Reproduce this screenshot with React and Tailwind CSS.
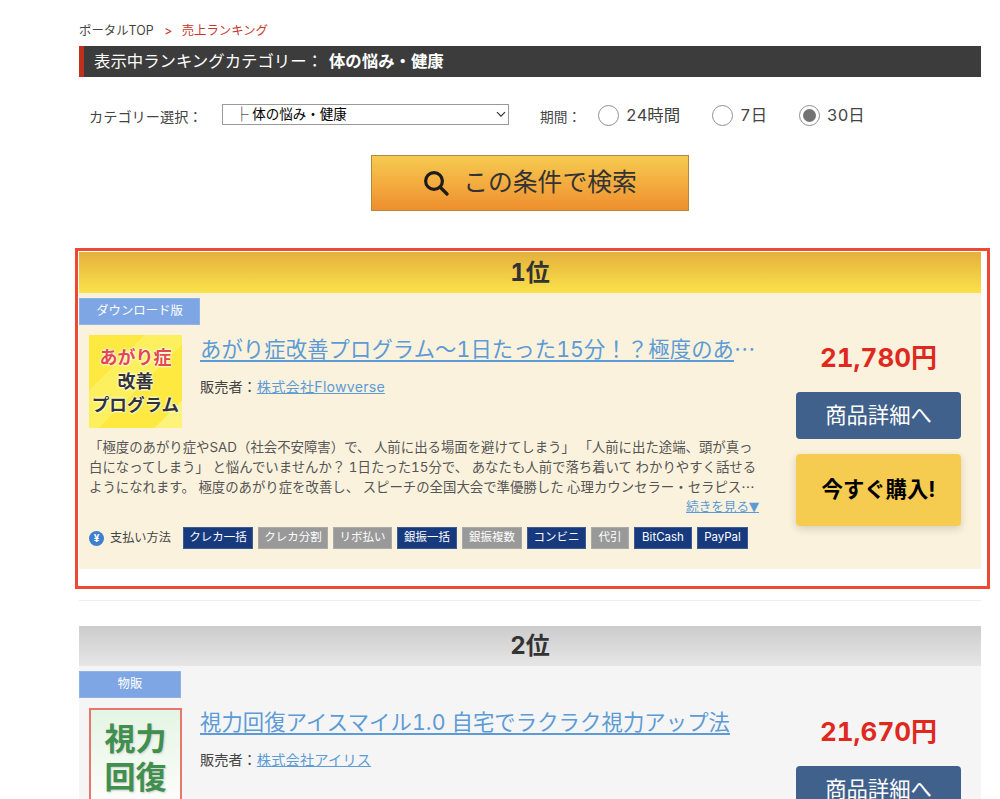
const tagsBlue = 'bg-[#173a7e] border-[#3d5a92] text-white';
const tagsGray = 'bg-[#999999] border-[#aaaaaa] text-white';
const payments = [
  ['クレカ一括', true, 'w-[70px]'],
  ['クレカ分割', false, 'w-[70px]'],
  ['リボ払い', false, 'w-[59px]'],
  ['銀振一括', true, 'w-[60px]'],
  ['銀振複数', false, 'w-[60px]'],
  ['コンビニ', true, 'w-[59px]'],
  ['代引', false, 'w-[38px]'],
  ['BitCash', true, 'w-[58px]'],
  ['PayPal', true, 'w-[51px]'],
];

function Dots() {
  return <span className="font-['Noto_Sans_CJK_JP',sans-serif] leading-none">…</span>;
}

function Radio({ label, checked, className }) {
  return (
    <label className={`mb-[1px] flex items-center gap-[7px] ${className}`}>
      <span className="flex h-[21px] w-[21px] items-center justify-center rounded-full border border-[#8f8f8f] bg-white">
        {checked && <span className="h-[13px] w-[13px] rounded-full bg-[#737373]" />}
      </span>
      <span className="text-[16.4px] leading-[21px] text-[#444]">{label}</span>
    </label>
  );
}

function RankCard({ rank, headClass, bodyClass, label, labelWidth, title, titleMore, seller, price, thumb, sideClass, children }) {
  return (
    <section>
      <h2 className={`flex items-center justify-center text-[24px] font-bold text-[#333] ${headClass}`}>{rank}</h2>
      <div className={`pt-[5px] ${bodyClass}`}>
        <div className={`flex h-[27px] items-center justify-center border border-[#8fb2e8] bg-[#7ea6e4] text-[12.4px] text-white ${labelWidth}`}>
          {label}
        </div>
        <div className="flex pl-[10px] pt-[10px]">
          <div className="w-[700px] shrink-0">
            <div className="flex gap-[18px]">
              {thumb}
              <div className="min-w-0 w-[560px]">
                <p className="mt-[-2px] whitespace-nowrap text-[21.33px] leading-[32px] tracking-[0.1px] text-[#5c9bd6]">
                  <a className="underline decoration-[1.5px] underline-offset-[3px]">{title}</a>
                  {titleMore && <Dots />}
                </p>
                <p className="mt-[12px] text-[14.2px] leading-[20px] text-[#444]">
                  販売者：<a className="tracking-[0.2px] text-[#5c9bd6] underline">{seller}</a>
                </p>
              </div>
            </div>
            {children}
          </div>
          <div className={`ml-[7px] w-[165px] shrink-0 ${sideClass}`}>
            <p className="mt-[5px] text-center text-[26px] font-bold leading-[36px] text-[#e0291e]">{price}</p>
            <a className="mt-[16px] flex h-[47px] items-center justify-center rounded-[4px] bg-[#3f618c] text-[21.33px] text-white">商品詳細へ</a>
            {rank === '1位' && (
              <a className="mt-[15px] flex h-[72px] items-center justify-center rounded-[4px] bg-[#f6cc50] text-[21.33px] font-bold text-black shadow-[0_3px_8px_rgba(0,0,0,0.15)]">今すぐ購入!</a>
            )}
          </div>
        </div>
      </div>
    </section>
  );
}

export default function App() {
  return (
    <div className="h-[799px] overflow-hidden bg-white font-['Inter','Noto_Sans_CJK_JP',sans-serif] tabular-nums">
      <div className="ml-[79px] w-[902px]">
        <nav className="flex h-[46px] items-center pt-[15px] text-[12.4px] leading-[20px]">
          <span className="text-[#444]">ポータルTOP</span>
          <span className="ml-[11px] text-[#c9372c]">&gt;</span>
          <span className="ml-[9px] text-[#c9372c]">売上ランキング</span>
        </nav>
        <div className="flex h-[31px] items-center border-l-[5px] border-[#c0301c] bg-[#3c3c3c] pl-[10px] text-[16.4px] text-white">
          <span>表示中ランキングカテゴリー：</span>
          <b className="ml-[6px] font-bold">体の悩み・健康</b>
        </div>

        <div className="flex h-[78px] items-center pl-[10px]">
          <span className="mt-[2px] w-[133px] text-[14.2px] text-[#444]">カテゴリー選択：</span>
          <div className="relative mb-[4px] h-[21px] w-[287px]">
            <select className="block h-[21px] w-full appearance-none border border-[#999] bg-white pl-[12px] text-[13.5px] leading-[19px] text-black">
              <option>├ 体の悩み・健康</option>
            </select>
            <svg className="pointer-events-none absolute right-[3px] top-[7px]" width="10" height="7" viewBox="0 0 10 7" fill="none" stroke="#333" strokeWidth="1.2">
              <path d="M1 1.2 L5 5.2 L9 1.2" />
            </svg>
          </div>
          <span className="ml-[31px] mt-[2px] w-[58px] text-[13.7px] text-[#444]">期間：</span>
          <Radio label="24時間" className="" />
          <Radio label="7日" className="ml-[32px]" />
          <Radio label="30日" checked className="ml-[32px]" />
        </div>

        <div className="flex justify-center">
          <button className="flex h-[56px] w-[318px] items-center justify-center gap-[14px] border border-[#b08a3c] bg-gradient-to-b from-[#f6ca50] to-[#ee8f2e] text-[24.8px] text-[#333]">
            <svg width="26" height="26" viewBox="0 0 26 26" fill="none" stroke="#1c1c1c" strokeWidth="3.2" strokeLinecap="round">
              <circle cx="11" cy="11" r="8.4" />
              <path d="M17.5 17.5 L24 24" />
            </svg>
            この条件で検索
          </button>
        </div>

        <div className="relative mt-[41px]">
          <div className="pointer-events-none absolute left-[-4px] right-[-9px] top-[-4px] bottom-[-20px] border-[3px] border-[#ee4a33]" />
          <RankCard
            rank="1位"
            headClass="h-[41px] bg-gradient-to-b from-[#e4b03d] to-[#fbe24a]"
            bodyClass="h-[276px] bg-[#fbf2dd]"
            label="ダウンロード版"
            labelWidth="w-[121px]"
            title="あがり症改善プログラム〜1日たった15分！？極度のあ"
            titleMore
            seller="株式会社Flowverse"
            price="21,780円"
            sideClass=""
            thumb={
              <div className="flex h-[93px] w-[93px] shrink-0 flex-col items-center justify-center bg-[linear-gradient(135deg,#fde93f_0%,#fde93f_30%,#fdf05e_30%,#fdf05e_55%,#fde93f_55%,#fde93f_85%,#fdf27a_85%)] pb-[3px] font-['Noto_Sans_CJK_JP',sans-serif] text-[18px] font-bold leading-[24px] text-[#333] [text-shadow:0_0_2px_#fff,0_0_2px_#fff,0_0_3px_#fff]">
                <span className="text-[#e4484d]">あがり症</span>
                <span>改善</span>
                <span className="whitespace-nowrap text-[17.6px]">プログラム</span>
              </div>
            }
          >
            <p className="mt-[9px] h-[60px] w-[671px] overflow-hidden text-[13.4px] leading-[20px] text-[#555]">
              「極度のあがり症やSAD（社会不安障害）で、 人前に出る場面を避けてしまう」 「人前に出た途端、頭が真っ白になってしまう」 と悩んでいませんか？ 1日たった15分で、 あなたも人前で落ち着いて わかりやすく話せるようになれます。 極度のあがり症を改善し、 スピーチの全国大会で準優勝した 心理カウンセラー・セラピス<Dots />
            </p>
            <div className="w-[670px] text-right text-[12.6px] leading-[20px] text-[#5c9bd6]">
              <a className="underline">続きを見る<span className="font-['DejaVu_Sans',sans-serif] text-[13px] leading-none">▼</span></a>
            </div>
            <div className="mt-[10px] flex items-center">
              <span className="flex h-[15px] w-[15px] items-center justify-center rounded-full bg-[#3f7fd0] text-[10px] font-bold leading-none text-white">¥</span>
              <span className="ml-[6px] w-[73px] text-[12.2px] text-[#444]">支払い方法</span>
              <div className="flex gap-[5px]">
                {payments.map(([t, on, w]) => (
                  <span key={t} className={`flex h-[22px] items-center justify-center border text-[11.5px] ${w} ${on ? tagsBlue : tagsGray}`}>{t}</span>
                ))}
              </div>
            </div>
          </RankCard>
        </div>

        <hr className="mt-[31px] border-0 border-t border-[#eeeeee]" />

        <div className="mt-[25px]">
          <RankCard
            rank="2位"
            headClass="h-[40px] bg-gradient-to-b from-[#cccccc] to-[#e6e6e6]"
            bodyClass="h-[200px] bg-[#f5f5f5]"
            label="物販"
            labelWidth="w-[102px]"
            title="視力回復アイスマイル1.0 自宅でラクラク視力アップ法"
            seller="株式会社アイリス"
            price="21,670円"
            sideClass="mt-[1px]"
            thumb={
              <div className="flex h-[93px] w-[93px] shrink-0 flex-col items-center border-2 border-[#e8766c] bg-gradient-to-b from-[#e4f5e4] to-[#fbfdf9] pt-[8px] font-['Noto_Sans_CJK_JP',sans-serif] text-[31px] font-bold leading-[38px] text-[#3f8f4f] [text-shadow:1px_1px_2px_#ccc]">
                <span>視力</span>
                <span>回復</span>
              </div>
            }
          />
        </div>
      </div>
    </div>
  );
}
